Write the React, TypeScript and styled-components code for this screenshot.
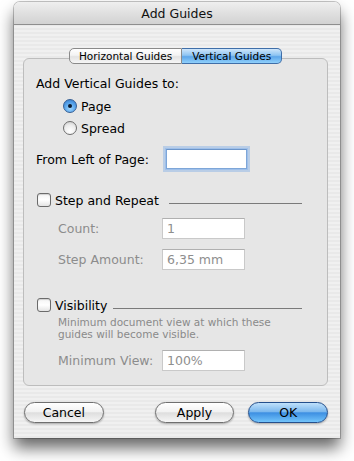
import styled, { createGlobalStyle } from "styled-components";

const GlobalStyle = createGlobalStyle`
  html, body {
    margin: 0;
    padding: 0;
    background: #ffffff;
  }
  body {
    font-family: "DejaVu Sans", "Liberation Sans", sans-serif;
    -webkit-font-smoothing: antialiased;
  }
`;

const Page = styled.div`
  width: 354px;
  height: 461px;
  padding: 2px 0 0 14px;
  box-sizing: border-box;
  background: #fff;
`;

const Window = styled.div`
  width: 326px;
  height: 436px;
  border-radius: 6px 6px 0 0;
  overflow: hidden;
  display: flex;
  flex-direction: column;
  background: repeating-linear-gradient(
    to bottom,
    #f0f0f0 0px,
    #f0f0f0 2px,
    #e9e9e9 2px,
    #e9e9e9 4px
  );
  box-shadow: 0 10px 16px rgba(0, 0, 0, 0.6), 0 0 0 1px rgba(0, 0, 0, 0.22);
`;

const TitleBar = styled.div`
  height: 22px;
  flex: none;
  display: flex;
  align-items: center;
  justify-content: center;
  background: linear-gradient(to bottom, #efefef 0%, #e0e0e0 50%, #d2d2d2 100%);
  border-bottom: 1px solid #8e8e8e;
  font-size: 12.5px;
  color: #111;
`;

const Content = styled.div`
  flex: 1;
  display: flex;
  flex-direction: column;
  padding: 23px 12px 0 9px;
`;

const TabStrip = styled.div`
  display: flex;
  justify-content: center;
  position: relative;
  z-index: 1;
`;

const Tab = styled.div<{ $active?: boolean; $side: "left" | "right" }>`
  height: 14px;
  padding: 0 ${(p) => (p.$side === "left" ? "9px 0 9px" : "10px 0 10px")};
  display: flex;
  align-items: center;
  font-size: 10.5px;
  color: #000;
  border: 1px solid ${(p) => (p.$active ? "#3f6ea8" : "#8a8a8a")};
  border-radius: ${(p) => (p.$side === "left" ? "5px 0 0 5px" : "0 5px 5px 0")};
  ${(p) => (p.$side === "right" ? "border-left: none;" : "")}
  background: ${(p) =>
    p.$active
      ? "linear-gradient(to bottom, #cfe6fb 0%, #8ec4f2 45%, #5ea6ea 55%, #8fd0fb 100%)"
      : "linear-gradient(to bottom, #ffffff 0%, #f3f3f3 45%, #e3e3e3 55%, #f6f6f6 100%)"};
`;

const TabBox = styled.div`
  margin-top: -6px;
  border: 1px solid #bdbdbd;
  border-radius: 6px;
  background: #e6e6e6;
  padding: 16px 13px 14px 12px;
  display: flex;
  flex-direction: column;
`;

const Heading = styled.div`
  height: 16px;
  display: flex;
  align-items: center;
  font-size: 12.5px;
  color: #000;
`;

const RadioGroup = styled.div`
  margin-top: 4px;
  padding-left: 27px;
  display: flex;
  flex-direction: column;
`;

const RadioRow = styled.label`
  height: 22px;
  display: flex;
  align-items: center;
  gap: 4px;
  font-size: 12.5px;
  color: #000;
`;

const RadioDot = styled.span<{ $checked?: boolean }>`
  width: 14px;
  height: 14px;
  border-radius: 50%;
  box-sizing: border-box;
  border: 1px solid ${(p) => (p.$checked ? "#355f95" : "#6e6e6e")};
  display: flex;
  align-items: center;
  justify-content: center;
  background: ${(p) =>
    p.$checked
      ? "radial-gradient(circle at 50% 70%, #9ed6ff 0%, #5aa6ec 50%, #2d74c8 100%)"
      : "radial-gradient(circle at 50% 75%, #ffffff 0%, #ececec 55%, #c4c4c4 100%)"};
  &::after {
    content: "";
    width: 4px;
    height: 4px;
    border-radius: 50%;
    background: ${(p) => (p.$checked ? "#0a1a30" : "transparent")};
  }
`;

const FieldRow = styled.div<{ $top: number; $indent?: number }>`
  margin-top: ${(p) => p.$top}px;
  padding-left: ${(p) => p.$indent ?? 0}px;
  display: flex;
  align-items: center;
`;

const FieldLabel = styled.span<{ $disabled?: boolean; $width: number }>`
  width: ${(p) => p.$width}px;
  flex: none;
  font-size: 12.5px;
  color: ${(p) => (p.$disabled ? "#8c8c8c" : "#000")};
`;

const TextBox = styled.div<{ $focused?: boolean; $disabled?: boolean }>`
  width: ${(p) => (p.$focused ? "81px" : "83px")};
  height: ${(p) => (p.$focused ? "20px" : "21px")};
  box-sizing: border-box;
  display: flex;
  align-items: center;
  padding-left: 4px;
  font-size: 12.5px;
  color: ${(p) => (p.$disabled ? "#8e8e8e" : "#000")};
  background: #fff;
  border: 1px solid ${(p) => (p.$focused ? "#7ea6d8" : "#c9c9c9")};
  border-top-color: ${(p) => (p.$focused ? "#6c95c9" : "#b0b0b0")};
  margin: ${(p) => (p.$focused ? "3px" : "0")};
  box-shadow: ${(p) =>
    p.$focused ? "0 0 0 1px #9fc0ea, 0 0 0 3px rgba(140, 180, 230, 0.5)" : "none"};
`;

const SectionRow = styled.div<{ $top: number }>`
  margin-top: ${(p) => p.$top}px;
  height: 16px;
  display: flex;
  align-items: center;
  padding-left: 1px;
`;

const CheckBox = styled.span`
  width: 14px;
  height: 14px;
  flex: none;
  box-sizing: border-box;
  border: 1px solid #6b6b6b;
  border-radius: 3px;
  background: linear-gradient(to bottom, #f4f4f4 0%, #ffffff 50%, #e4e4e4 100%);
  box-shadow: inset 0 1px 1px rgba(0, 0, 0, 0.15);
`;

const SectionTitle = styled.span`
  margin-left: 4px;
  font-size: 12.5px;
  color: #000;
`;

const Rule = styled.span<{ $gap: number }>`
  flex: 1;
  height: 1px;
  margin: 7px 12px 0 ${(p) => p.$gap}px;
  background: #7a7a7a;
`;

const Description = styled.div`
  margin-top: 3px;
  padding-left: 22px;
  font-size: 10.5px;
  line-height: 12px;
  color: #8a8a8a;
`;

const ButtonRow = styled.div`
  margin-top: 16px;
  display: flex;
  align-items: center;
  padding-left: 1px;
`;

const PushButton = styled.button<{ $primary?: boolean }>`
  width: 80px;
  height: 21px;
  padding: 0;
  border-radius: 11px;
  font-family: inherit;
  font-size: 12.5px;
  color: #000;
  border: 1px solid ${(p) => (p.$primary ? "#244f8c" : "#6f6f6f")};
  background: ${(p) =>
    p.$primary
      ? "linear-gradient(to bottom, #bfe0fb 0%, #7db9ee 45%, #3d8fe2 52%, #72c4fb 100%)"
      : "linear-gradient(to bottom, #ffffff 0%, #f2f2f2 45%, #dedede 52%, #f6f6f6 100%)"};
  box-shadow: 0 1px 2px rgba(0, 0, 0, 0.3);
`;

const Spacer = styled.div<{ $w: number }>`
  width: ${(p) => p.$w}px;
  flex: none;
`;

export default function App() {
  return (
    <Page>
      <GlobalStyle />
      <Window>
        <TitleBar>Add Guides</TitleBar>
        <Content>
          <TabStrip>
            <Tab $side="left">Horizontal Guides</Tab>
            <Tab $side="right" $active>
              Vertical Guides
            </Tab>
          </TabStrip>
          <TabBox>
            <Heading>Add Vertical Guides to:</Heading>
            <RadioGroup>
              <RadioRow>
                <RadioDot $checked />
                Page
              </RadioRow>
              <RadioRow>
                <RadioDot />
                Spread
              </RadioRow>
            </RadioGroup>

            <FieldRow $top={7}>
              <FieldLabel $width={127}>From Left of Page:</FieldLabel>
              <TextBox $focused />
            </FieldRow>

            <SectionRow $top={20}>
              <CheckBox />
              <SectionTitle>Step and Repeat</SectionTitle>
              <Rule $gap={10} />
            </SectionRow>

            <FieldRow $top={10} $indent={22}>
              <FieldLabel $disabled $width={104}>
                Count:
              </FieldLabel>
              <TextBox $disabled>1</TextBox>
            </FieldRow>
            <FieldRow $top={10} $indent={22}>
              <FieldLabel $disabled $width={104}>
                Step Amount:
              </FieldLabel>
              <TextBox $disabled>6,35 mm</TextBox>
            </FieldRow>

            <SectionRow $top={27}>
              <CheckBox />
              <SectionTitle>Visibility</SectionTitle>
              <Rule $gap={6} />
            </SectionRow>
            <Description>
              Minimum document view at which these
              <br />
              guides will become visible.
            </Description>
            <FieldRow $top={10} $indent={22}>
              <FieldLabel $disabled $width={104}>
                Minimum View:
              </FieldLabel>
              <TextBox $disabled>100%</TextBox>
            </FieldRow>
          </TabBox>
          <ButtonRow>
            <PushButton>Cancel</PushButton>
            <Spacer $w={51} />
            <PushButton>Apply</PushButton>
            <Spacer $w={14} />
            <PushButton $primary>OK</PushButton>
          </ButtonRow>
        </Content>
      </Window>
    </Page>
  );
}
